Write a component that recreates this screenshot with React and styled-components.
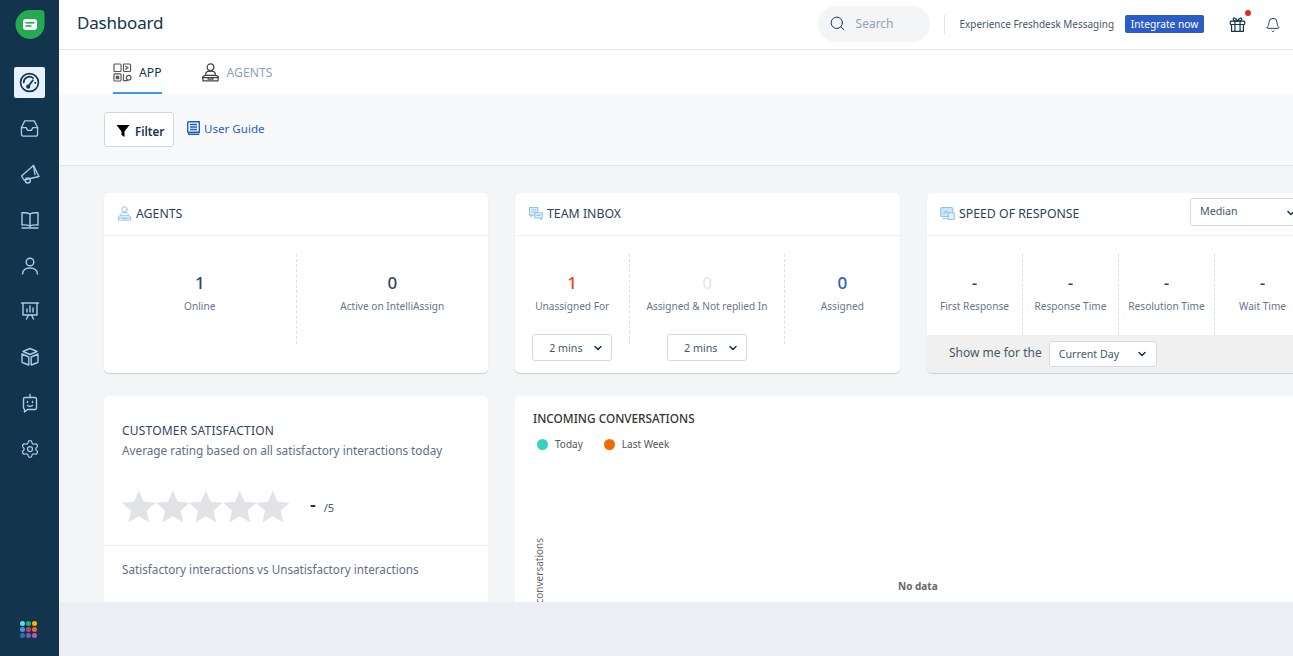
import React from "react";
import styled, { createGlobalStyle } from "styled-components";
import { Search, Bell, Settings, ChevronDown } from "lucide-react";

const GlobalStyle = createGlobalStyle`
  html, body {
    margin: 0;
    padding: 0;
    height: 100%;
    overflow: hidden;
    font-family: "Noto Sans", "Open Sans", sans-serif;
    color: #12344d;
  }
  * { box-sizing: border-box; }
`;

const Page = styled.div`
  display: flex;
  height: 100vh;
  overflow: hidden;
`;

/* sidebar */
const Sidebar = styled.aside`
  width: 59px;
  flex-shrink: 0;
  background: #12344d;
  display: flex;
  flex-direction: column;
  align-items: center;
  padding: 10px 0 18px;
`;
const LogoWrap = styled.div`
  width: 30px;
  height: 30px;
  margin-bottom: 27px;
`;
const Nav = styled.nav`
  display: flex;
  flex-direction: column;
  align-items: center;
  gap: 14.8px;
`;
const NavItem = styled.div`
  width: 31px;
  height: 31px;
  display: flex;
  align-items: center;
  justify-content: center;
  border-radius: 2px;
  background: ${({ $active }) => ($active ? "#e5f2fd" : "transparent")};
  color: ${({ $active }) => ($active ? "#12344d" : "#a9cde9")};
`;
const AppGrid = styled.div`
  margin: auto 3px 0 0;
  display: grid;
  grid-template-columns: repeat(3, 5px);
  gap: 1px;
`;
const AppDot = styled.span`
  width: 5px;
  height: 5px;
  border-radius: 50%;
  background: ${({ $color }) => $color};
`;

/* header */
const Main = styled.div`
  flex: 1;
  min-width: 0;
  display: flex;
  flex-direction: column;
`;
const Header = styled.header`
  height: 50px;
  flex-shrink: 0;
  display: flex;
  align-items: center;
  padding: 0 12px 4px 18px;
  background: #fff;
  border-bottom: 1px solid #e6e9ec;
`;
const Title = styled.h1`
  margin: 0;
  font-size: 17px;
  font-weight: 400;
  letter-spacing: -0.2px;
  color: #12344d;
`;
const SearchBox = styled.div`
  margin-left: auto;
  width: 112px;
  height: 36px;
  margin-top: 2px;
  padding-left: 11px;
  display: flex;
  align-items: center;
  gap: 10px;
  background: #f3f5f7;
  border-radius: 18px;
  font-size: 12px;
  color: #92a2b1;
`;
const HeaderRule = styled.span`
  width: 1px;
  height: 19px;
  margin: 4px 15px 0 14px;
  background: #dfe3e7;
`;
const Promo = styled.span`
  font-size: 9.95px;
  color: #475867;
  margin-top: 2px;
`;
const IntegrateButton = styled.button`
  margin: 3px 0 0 11px;
  width: 79px;
  height: 18px;
  padding: 0;
  border: 0;
  border-radius: 2px;
  background: #2c5cc5;
  color: #fff;
  font: 400 10.2px "Noto Sans", sans-serif;
`;
const GiftWrap = styled.div`
  position: relative;
  margin: 4px 0 0 25px;
  display: flex;
`;
const RedDot = styled.span`
  position: absolute;
  top: -6px;
  right: -5px;
  width: 6px;
  height: 6px;
  border-radius: 50%;
  background: #d72d30;
`;
const BellWrap = styled.div`
  margin: 5px 0 0 19px;
  display: flex;
`;

/* tabs + filter band */
const Tabs = styled.div`
  height: 44px;
  flex-shrink: 0;
  display: flex;
  gap: 39px;
  padding-left: 54px;
  background: #fff;
`;
const Tab = styled.div`
  display: flex;
  align-items: center;
  gap: 7px;
  height: 44px;
  padding-top: 2px;
  font-size: 12.2px;
  font-weight: 400;
  color: ${({ $active }) => ($active ? "#12344d" : "#92a2b1")};
  border-bottom: 2px solid ${({ $active }) => ($active ? "#3b9ae8" : "transparent")};
`;
const TabIcon = styled.span`
  display: flex;
  color: ${({ $tone }) => $tone};
`;
const FilterBand = styled.div`
  height: 72px;
  flex-shrink: 0;
  display: flex;
  align-items: flex-start;
  padding: 18px 0 0 45px;
  background: #f8f9fb;
  border-bottom: 1px solid #dfe3e7;
`;
const FilterButton = styled.button`
  width: 70px;
  height: 35px;
  padding: 3px 0 0 11px;
  display: flex;
  align-items: center;
  gap: 5px;
  background: #fff;
  border: 1px solid #cfd7df;
  border-radius: 3px;
  font: 600 11.6px "Noto Sans", sans-serif;
  color: #12344d;
`;
const GuideLink = styled.a`
  display: flex;
  align-items: center;
  gap: 4px;
  height: 18px;
  margin: 7px 0 0 13px;
  font-size: 11.6px;
  color: #2c5cc5;
`;

/* dashboard */
const Content = styled.main`
  flex: 1;
  min-height: 0;
  overflow: hidden;
  padding: 27px 0 0 45px;
  background: #f3f5f7;
`;
const Grid = styled.div`
  display: grid;
  grid-template-columns: 384px 385px 383px;
  grid-template-rows: 180px 300px;
  column-gap: 27px;
  row-gap: 23px;
`;
const Card = styled.section`
  background: #fff;
  border-radius: 5px;
  box-shadow: ${({ $flat }) => ($flat ? "none" : "0 1px 1px #c9ced4")};
  overflow: hidden;
  display: flex;
  flex-direction: column;
  min-width: 0;
  grid-column: ${({ $span }) => ($span ? `span ${$span}` : "auto")};
`;
const CardHeader = styled.div`
  height: 43px;
  flex-shrink: 0;
  display: flex;
  align-items: center;
  gap: 4px;
  padding: 0 10px 1px 13px;
  border-bottom: 1px solid #eef0f3;
`;
const CardTitle = styled.h2`
  margin: 0;
  font-size: 12.3px;
  font-weight: 400;
  color: #2f4160;
`;
const HeadIcon = styled.span`
  display: flex;
  color: #8ec3ec;
`;
const Stats = styled.div`
  flex: 1;
  display: flex;
  padding-top: 18px;
`;
const Stat = styled.div`
  flex: ${({ $grow }) => $grow || 1} 0 0;
  height: ${({ $height }) => $height || 90}px;
  display: flex;
  flex-direction: column;
  align-items: center;
  padding-top: 18px;
  border-right: ${({ $last }) => ($last ? "0" : "1px dashed #dcdfe5")};
`;
const StatValue = styled.div`
  height: 22px;
  line-height: 22px;
  font-size: 17px;
  font-weight: 500;
  color: ${({ $color }) => $color || "#344563"};
`;
const StatLabel = styled.div`
  margin-top: 4px;
  height: 16px;
  line-height: 16px;
  font-size: 10.1px;
  white-space: nowrap;
  color: #66758c;
`;
const Select = styled.div`
  width: ${({ $width }) => $width}px;
  height: ${({ $height }) => $height || 27}px;
  flex-shrink: 0;
  display: flex;
  align-items: center;
  justify-content: space-between;
  padding: ${({ $pad }) => $pad || "0 7px 0 16px"};
  background: #fff;
  border: 1px solid #d5dae0;
  border-radius: 3px;
  font-size: 10.7px;
  color: #475867;
`;
const StatSelect = styled(Select)`
  margin-top: 20px;
`;
const MedianSelect = styled(Select)`
  margin: 0 0 3px auto;
  align-items: flex-start;
`;
const MedianChevron = styled.span`
  display: flex;
  margin-top: 3px;
`;
const ShowBar = styled.div`
  height: 38px;
  flex-shrink: 0;
  display: flex;
  align-items: center;
  gap: 7px;
  padding-left: 22px;
  background: #f0f0f0;
  font-size: 12px;
  color: #475867;
`;
const ShowText = styled.span`
  margin-top: -3px;
`;
const DaySelect = styled(Select)`
  margin-top: 0;
`;

const CsatTop = styled.div`
  height: 150px;
  flex-shrink: 0;
  padding: 26px 18px 0;
  border-bottom: 1px solid #eceef2;
`;
const CsatTitle = styled.h3`
  margin: 0;
  height: 18px;
  line-height: 18px;
  font-size: 12px;
  font-weight: 400;
  letter-spacing: 0.2px;
  color: #344563;
`;
const CsatSub = styled.p`
  margin: 1px 0 0;
  line-height: 18px;
  font-size: 11.78px;
  color: #5f6f85;
`;
const RatingRow = styled.div`
  display: flex;
  align-items: center;
  margin-top: 31px;
`;
const Stars = styled.div`
  display: flex;
`;
const RatingDash = styled.span`
  margin: -6px 0 0 20px;
  font-size: 18px;
  font-weight: 600;
  color: #12344d;
`;
const RatingMax = styled.span`
  margin: 2px 0 0 8px;
  font-size: 11px;
  color: #475867;
`;
const CsatFoot = styled.p`
  margin: 0;
  padding: 14px 18px 0;
  line-height: 18px;
  font-size: 11.7px;
  color: #5f6f85;
`;
const ChartHead = styled.div`
  padding: 13px 18px 0;
`;
const ChartTitle = styled.h3`
  margin: 0;
  line-height: 18px;
  font-size: 11.8px;
  font-weight: 500;
  color: #333;
`;
const Legend = styled.div`
  display: flex;
  align-items: center;
  gap: 21px;
  margin: 8px 0 0 4px;
  height: 18px;
  font-size: 10px;
  color: #555;
`;
const LegendItem = styled.span`
  display: flex;
  align-items: center;
  gap: 7px;
`;
const LegendDot = styled.i`
  width: 11px;
  height: 11px;
  border-radius: 50%;
  background: ${({ $color }) => $color};
`;
const ChartArea = styled.div`
  display: flex;
  align-items: flex-start;
  padding: 85px 0 0 17px;
`;
const AxisLabel = styled.span`
  writing-mode: vertical-rl;
  transform: rotate(180deg);
  font-size: 10px;
  line-height: 14px;
  color: #666;
`;
const NoData = styled.span`
  margin: 40px 0 0 352px;
  font-size: 10px;
  font-weight: 700;
  line-height: 16px;
  color: #666;
`;
const Footer = styled.div`
  height: 54px;
  flex-shrink: 0;
  background: #ebeff3;
`;

const Icon = ({ children, size = 20, box = 20, sw = 1.4 }) => (
  <svg
    width={size}
    height={size}
    viewBox={`0 0 ${box} ${box}`}
    fill="none"
    stroke="currentColor"
    strokeWidth={sw}
    strokeLinecap="round"
    strokeLinejoin="round"
  >
    {children}
  </svg>
);

const Logo = () => (
  <svg width="30" height="30" viewBox="0 0 30 30">
    <path d="M15 0h11a3.500 3.500 0 0 1 3.500 3.500V15A14.500 14.500 0 1 1 15 0z" fill="#25a952" />
    <rect x="8" y="9" width="14" height="11" rx="3" fill="#fff" />
    <rect x="10.500" y="12" width="9" height="1.600" fill="#25a952" />
    <rect x="10.500" y="15.200" width="6" height="1.600" fill="#25a952" />
  </svg>
);

const NAV_ICONS = [
  <Icon key="gauge" size={21} sw={1.6}>
    <circle cx="10" cy="10" r="8.500" />
    <path d="M4.500 10a5.500 5.500 0 0 1 9-4.200M15.500 10v.4" />
    <path d="M8.800 13.800l4.400-6" />
    <circle cx="8.800" cy="14" r="1.200" />
  </Icon>,
  <Icon key="inbox" size={19}>
    <path d="M5 2h10l3.500 7v7a2 2 0 0 1-2 2h-13a2 2 0 0 1-2-2V9z" />
    <path d="M1.500 9h5l1.500 3h4l1.500-3h5" />
  </Icon>,
  <Icon key="megaphone">
    <path d="M1.500 12L13.500 1.500 19 12.500 4 16z" />
    <circle cx="7.800" cy="16.500" r="2.500" />
    <path d="M13.500 1.500l1.500 9" />
  </Icon>,
  <Icon key="book">
    <path d="M10 4C8 2.800 5 2.500 2 2.800V15c3-.3 6 0 8 1.200 2-1.200 5-1.500 8-1.200V2.800C15 2.500 12 2.800 10 4z" />
    <path d="M10 4v12M2 18h16" />
  </Icon>,
  <Icon key="user">
    <circle cx="10" cy="6" r="3.800" />
    <path d="M2.500 18c.3-4 3.500-6 7.500-6s7.200 2 7.500 6" />
  </Icon>,
  <Icon key="board">
    <path d="M1.500 2h17M3 2v12h14V2" />
    <path d="M7 11V8M10 11V5M13 11V7" />
    <path d="M6.500 18l2-4M13.500 18l-2-4" />
  </Icon>,
  <Icon key="cube">
    <path d="M10 1.500l7 3-7 3-7-3z" />
    <path d="M2 7l6.800 3v8L3.500 16a1.500 1.500 0 0 1-1.500-1.400zM18 7l-6.800 3v8l5.300-2a1.500 1.500 0 0 0 1.500-1.400z" />
  </Icon>,
  <Icon key="bot">
    <path d="M10 1.500v3" />
    <path d="M5 4.500h10a1.500 1.500 0 0 1 1.500 1.500v9a1.500 1.500 0 0 1-1.500 1.500H7.500L4.500 19v-2.800A1.500 1.500 0 0 1 3.500 15V6A1.500 1.500 0 0 1 5 4.500z" />
    <path d="M7.500 8.500v1M12.500 8.500v1M7.500 12.500c1.500 1 3.500 1 5 0" />
  </Icon>,
  <Settings key="gear" size={20} strokeWidth={1.5} />,
];

const APP_DOTS = [
  "#4fe3ee", "#1db16b", "#f7b500",
  "#3f9be8", "#d83b4a", "#f26522",
  "#2c6fb5", "#7e57b8", "#b45cc0",
];

const AppTabIcon = () => (
  <Icon size={19} sw={1.2}>
    <rect x="1" y="1" width="7.500" height="8" rx="1" />
    <rect x="11" y="1" width="7.500" height="8" rx="1" />
    <rect x="1" y="11.500" width="7.500" height="7.500" rx="1" />
    <rect x="3.500" y="14" width="2.500" height="2.500" fill="currentColor" />
    <path d="M13 3.500l3 1.500-3 1.500M11 12v6.500h4" />
    <circle cx="16.500" cy="15.500" r="2.500" />
  </Icon>
);

const AgentIcon = ({ size = 19 }) => (
  <Icon size={size} sw={1.3}>
    <circle cx="10" cy="4.500" r="3.500" />
    <path d="M5 13V11.500C5 9.500 7 8.500 10 8.500s5 1 5 3V13" />
    <path d="M1.500 15.500C2 14 3 13 5 13h10c2 0 3 1 3.500 2.500z" />
    <path d="M2 15.500v3.300h16v-3.300M7.500 15.500v1.500h5v-1.500" />
  </Icon>
);

const ChatIcon = () => (
  <Icon size={15} sw={1.5}>
    <path d="M2 2h11v10H6l-2 2v-2H2z" fill="#e5f2fd" />
    <path d="M4.500 5h6M4.500 8h6" />
    <path d="M9 9h10v7h-1.500v2l-2-2H9z" fill="#e5f2fd" />
    <path d="M12 12.500h4" />
  </Icon>
);

const ScreenIcon = () => (
  <Icon size={15} sw={1.5}>
    <rect x="1" y="2" width="16" height="12" rx="1.500" fill="#cfe6f8" />
    <path d="M4 17h9" />
    <rect x="11" y="9" width="8" height="9" rx="1" fill="#e5f2fd" />
    <path d="M5 10l3-3 2 2" />
  </Icon>
);

const Star = () => (
  <svg width="33.600" height="33" viewBox="0 0 34 33">
    <path d="M17 .5l4.900 11.300 12.100 1-9.200 8 2.800 12L17 26.400 6.400 32.800l2.800-12-9.200-8 12.100-1z" fill="#e2e3e7" />
  </svg>
);

const Chevron = () => <ChevronDown size={12} strokeWidth={3} color="#12344d" />;

const App = () => (
  <Page>
    <GlobalStyle />
    <Sidebar>
      <LogoWrap>
        <Logo />
      </LogoWrap>
      <Nav>
        {NAV_ICONS.map((icon, i) => (
          <NavItem key={i} $active={i === 0}>
            {icon}
          </NavItem>
        ))}
      </Nav>
      <AppGrid>
        {APP_DOTS.map((c) => (
          <AppDot key={c} $color={c} />
        ))}
      </AppGrid>
    </Sidebar>

    <Main>
      <Header>
        <Title>Dashboard</Title>
        <SearchBox>
          <Search size={17} strokeWidth={1.4} color="#12344d" />
          Search
        </SearchBox>
        <HeaderRule />
        <Promo>Experience Freshdesk Messaging</Promo>
        <IntegrateButton>Integrate now</IntegrateButton>
        <GiftWrap>
          <Icon size={17} sw={1.4}>
            <rect x="1.500" y="6" width="17" height="4" rx="1" />
            <path d="M3 10v8h14v-8M7 6v12M13 6v12" />
            <path d="M10 6C8 2 4.500 1.500 5 4c.3 1.500 3 2 5 2zm0 0c2-4 5.500-4.500 5-2-.3 1.500-3 2-5 2z" />
          </Icon>
          <RedDot />
        </GiftWrap>
        <BellWrap>
          <Bell size={16} strokeWidth={1.4} color="#12344d" />
        </BellWrap>
      </Header>

      <Tabs>
        <Tab $active>
          <TabIcon $tone="#555">
            <AppTabIcon />
          </TabIcon>
          APP
        </Tab>
        <Tab>
          <TabIcon $tone="#444">
            <AgentIcon />
          </TabIcon>
          AGENTS
        </Tab>
      </Tabs>

      <FilterBand>
        <FilterButton>
          <svg width="14" height="14" viewBox="0 0 14 14">
            <path d="M.5 1h13L8.500 7.500V13L5.500 11V7.500z" fill="#000" />
          </svg>
          Filter
        </FilterButton>
        <GuideLink>
          <svg width="13" height="14" viewBox="0 0 13 14" fill="none" stroke="#1f5fc4" strokeWidth="1.400">
            <path d="M.7 11.500V1.700a1 1 0 0 1 1-1h10.600v10.500H2a1.300 1.300 0 0 0 0 2.100h10.300" />
            <path d="M3 3.500h7M3 6h7M3 8.500h7" />
          </svg>
          User Guide
        </GuideLink>
      </FilterBand>

      <Content>
        <Grid>
          <Card>
            <CardHeader>
              <HeadIcon>
                <AgentIcon size={15} />
              </HeadIcon>
              <CardTitle>AGENTS</CardTitle>
            </CardHeader>
            <Stats>
              <Stat>
                <StatValue>1</StatValue>
                <StatLabel>Online</StatLabel>
              </Stat>
              <Stat $last>
                <StatValue>0</StatValue>
                <StatLabel>Active on IntelliAssign</StatLabel>
              </Stat>
            </Stats>
          </Card>

          <Card>
            <CardHeader>
              <HeadIcon>
                <ChatIcon />
              </HeadIcon>
              <CardTitle>TEAM INBOX</CardTitle>
            </CardHeader>
            <Stats>
              <Stat $grow={115}>
                <StatValue $color="#e9421f">1</StatValue>
                <StatLabel>Unassigned For</StatLabel>
                <StatSelect $width={80}>
                  2 mins
                  <Chevron />
                </StatSelect>
              </Stat>
              <Stat $grow={154}>
                <StatValue $color="#e6e8ec">0</StatValue>
                <StatLabel>Assigned &amp; Not replied In</StatLabel>
                <StatSelect $width={80}>
                  2 mins
                  <Chevron />
                </StatSelect>
              </Stat>
              <Stat $grow={116} $last>
                <StatValue $color="#2c5cc5">0</StatValue>
                <StatLabel>Assigned</StatLabel>
              </Stat>
            </Stats>
          </Card>

          <Card>
            <CardHeader>
              <HeadIcon>
                <ScreenIcon />
              </HeadIcon>
              <CardTitle>SPEED OF RESPONSE</CardTitle>
              <MedianSelect $width={110} $height={28} $pad="5px 2px 0 9px">
                Median
                <MedianChevron>
                  <Chevron />
                </MedianChevron>
              </MedianSelect>
            </CardHeader>
            <Stats>
              {["First Response", "Response Time", "Resolution Time", "Wait Time"].map((label, i) => (
                <Stat key={label} $height={81} $last={i === 3}>
                  <StatValue>-</StatValue>
                  <StatLabel>{label}</StatLabel>
                </Stat>
              ))}
            </Stats>
            <ShowBar>
              <ShowText>Show me for the</ShowText>
              <DaySelect $width={108} $height={26} $pad="0 8px 0 9px">
                Current Day
                <Chevron />
              </DaySelect>
            </ShowBar>
          </Card>

          <Card $flat>
            <CsatTop>
              <CsatTitle>CUSTOMER SATISFACTION</CsatTitle>
              <CsatSub>Average rating based on all satisfactory interactions today</CsatSub>
              <RatingRow>
                <Stars>
                  {[1, 2, 3, 4, 5].map((n) => (
                    <Star key={n} />
                  ))}
                </Stars>
                <RatingDash>-</RatingDash>
                <RatingMax>/5</RatingMax>
              </RatingRow>
            </CsatTop>
            <CsatFoot>Satisfactory interactions vs Unsatisfactory interactions</CsatFoot>
          </Card>

          <Card $flat $span={2}>
            <ChartHead>
              <ChartTitle>INCOMING CONVERSATIONS</ChartTitle>
              <Legend>
                <LegendItem>
                  <LegendDot $color="#36d1c0" />
                  Today
                </LegendItem>
                <LegendItem>
                  <LegendDot $color="#f56a00" />
                  Last Week
                </LegendItem>
              </Legend>
            </ChartHead>
            <ChartArea>
              <AxisLabel>conversations</AxisLabel>
              <NoData>No data</NoData>
            </ChartArea>
          </Card>
        </Grid>
      </Content>
      <Footer />
    </Main>
  </Page>
);

export default App;
